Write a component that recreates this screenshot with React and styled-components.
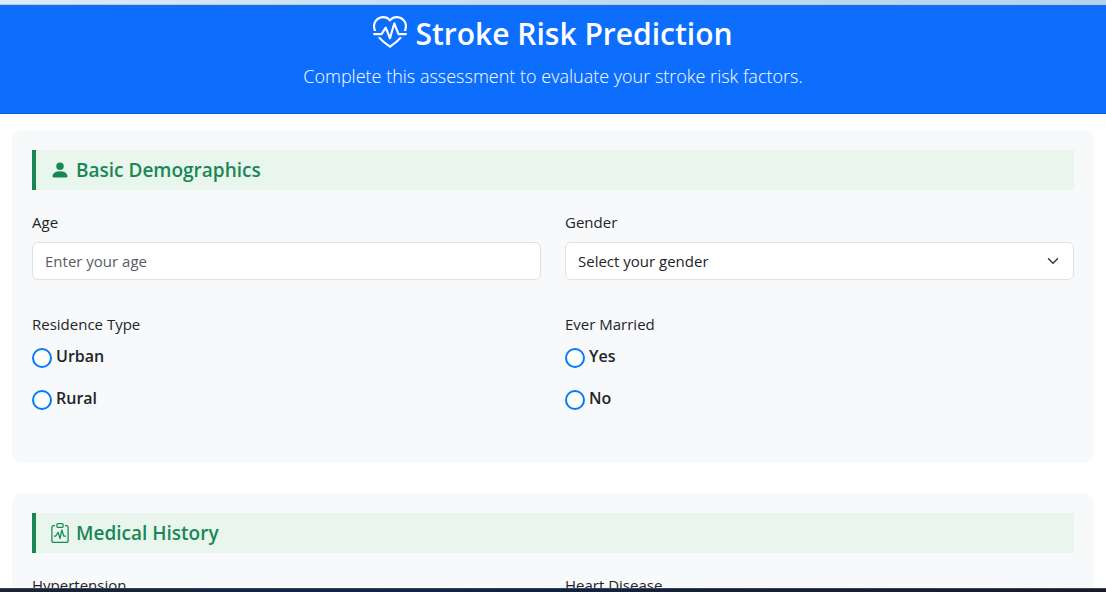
import React from "react";
import styled, { createGlobalStyle } from "styled-components";
import { BsHeartPulse, BsPersonFill, BsClipboardPulse } from "react-icons/bs";

const GlobalStyle = createGlobalStyle`
  *, *::before, *::after { box-sizing: border-box; }
  body {
    margin: 0;
    background: #fff;
    color: #212529;
    font-family: "Segoe UI", "Open Sans", "Noto Sans", sans-serif;
    font-size: 15px;
    line-height: 24px;
  }
`;

const Window = styled.div`
  display: flex;
  flex-direction: column;
  height: 100vh;
  overflow: hidden;
`;

const TopEdge = styled.div`
  flex: none;
  height: 5px;
  background: linear-gradient(90deg, #dcebf4, #bfdcf0 50%, #b4d4ec);
  border-bottom: 1px solid #c3c9cd;
`;

const BottomEdge = styled.div`
  flex: none;
  height: 4px;
  background: linear-gradient(90deg, #1b2230, #10234a 30%, #14203c 60%, #1a1a28);
  border-top: 1px solid #3a4552;
`;

const Page = styled.div`
  flex: 1;
  min-height: 0;
  overflow-y: auto;
  scrollbar-width: none;
`;

const Header = styled.header`
  padding: 10px 12px 22px;
  background: #0d6efd;
  border-bottom: 1px solid #0b5bd3;
  color: #fff;
  text-align: center;
`;

const Title = styled.h1`
  display: flex;
  align-items: center;
  justify-content: center;
  gap: 8px;
  margin: 0 0 8px;
  font-size: 30px;
  font-weight: 600;
  line-height: 38px;

  svg { width: 34px; height: 34px; margin-bottom: 2px; }
`;

const Subtitle = styled.p`
  margin: 0;
  font-size: 18px;
  font-weight: 300;
  line-height: 30px;
`;

const Form = styled.form`
  display: flex;
  flex-direction: column;
  gap: 30px;
  padding: 16px 12px;
`;

const Card = styled.section`
  padding: 20px 20px 35px;
  border-radius: 10px;
  background: #f8f9fb;
`;

const SectionTitle = styled.h2`
  display: flex;
  align-items: center;
  gap: 6px;
  margin: 0 0 20px;
  padding: 8px 14px;
  border-left: 4px solid #198754;
  background: #e9f6ee;
  color: #198754;
  font-size: 19px;
  font-weight: 600;
  line-height: 24px;

  svg { width: 20px; height: 20px; }
`;

const Fields = styled.div`
  display: grid;
  grid-template-columns: 1fr 1fr;
  gap: 32px 24px;
`;

const Label = styled.label`
  display: block;
  margin-bottom: 8px;
`;

const Input = styled.input`
  display: block;
  width: 100%;
  height: 38px;
  padding: 6px 12px;
  border: 1px solid #dee2e6;
  border-radius: 6px;
  background: #fff;
  color: inherit;
  font: inherit;

  &::placeholder { color: #595c5f; opacity: 1; }
`;

const SelectWrap = styled.div`
  position: relative;

  svg {
    position: absolute;
    top: 13px;
    right: 15px;
    width: 12px;
    height: 12px;
    pointer-events: none;
  }
`;

const Select = styled(Input).attrs({ as: "select" })`
  appearance: none;
  padding-right: 36px;
`;

const Group = styled.fieldset`
  min-width: 0;
  margin: 0;
  padding: 0;
  border: 0;
`;

const Legend = styled.legend`
  margin-bottom: 8px;
  padding: 0;
`;

const Option = styled.label`
  display: flex;
  align-items: center;
  gap: 4px;
  height: 24px;
  margin-bottom: 18px;
  font-size: 16px;
  font-weight: 600;
`;

const Radio = styled.input`
  appearance: none;
  flex: none;
  width: 20px;
  height: 20px;
  margin: 4px 0 0;
  border: 2px solid #007bff;
  border-radius: 50%;
  background: #fff;

  &:checked { background: #007bff; box-shadow: inset 0 0 0 3px #fff; }
`;

function Chevron() {
  return (
    <svg viewBox="0 0 16 16" fill="none" stroke="#343a40" strokeWidth="2" strokeLinecap="round" strokeLinejoin="round" aria-hidden="true">
      <path d="m2 5 6 6 6-6" />
    </svg>
  );
}

function SelectField({ id, label, placeholder, options }) {
  return (
    <div>
      <Label htmlFor={id}>{label}</Label>
      <SelectWrap>
        <Select id={id} name={id} defaultValue="">
          <option value="" disabled>{placeholder}</option>
          {options.map((o) => <option key={o}>{o}</option>)}
        </Select>
        <Chevron />
      </SelectWrap>
    </div>
  );
}

function RadioGroup({ name, label, options }) {
  return (
    <Group>
      <Legend>{label}</Legend>
      {options.map((o) => (
        <Option key={o}>
          <Radio type="radio" name={name} value={o} />
          {o}
        </Option>
      ))}
    </Group>
  );
}

export default function App() {
  return (
    <Window>
      <GlobalStyle />
      <TopEdge />
      <Page>
        <Header>
          <Title><BsHeartPulse aria-hidden="true" />Stroke Risk Prediction</Title>
          <Subtitle>Complete this assessment to evaluate your stroke risk factors.</Subtitle>
        </Header>
        <Form>
          <Card>
            <SectionTitle><BsPersonFill aria-hidden="true" />Basic Demographics</SectionTitle>
            <Fields>
              <div>
                <Label htmlFor="age">Age</Label>
                <Input id="age" name="age" inputMode="numeric" placeholder="Enter your age" />
              </div>
              <SelectField id="gender" label="Gender" placeholder="Select your gender" options={["Male", "Female"]} />
              <RadioGroup name="residence" label="Residence Type" options={["Urban", "Rural"]} />
              <RadioGroup name="married" label="Ever Married" options={["Yes", "No"]} />
            </Fields>
          </Card>
          <Card>
            <SectionTitle><BsClipboardPulse aria-hidden="true" />Medical History</SectionTitle>
            <Fields>
              <RadioGroup name="hypertension" label="Hypertension" options={["Yes", "No"]} />
              <RadioGroup name="heart" label="Heart Disease" options={["Yes", "No"]} />
            </Fields>
          </Card>
        </Form>
      </Page>
      <BottomEdge />
    </Window>
  );
}
